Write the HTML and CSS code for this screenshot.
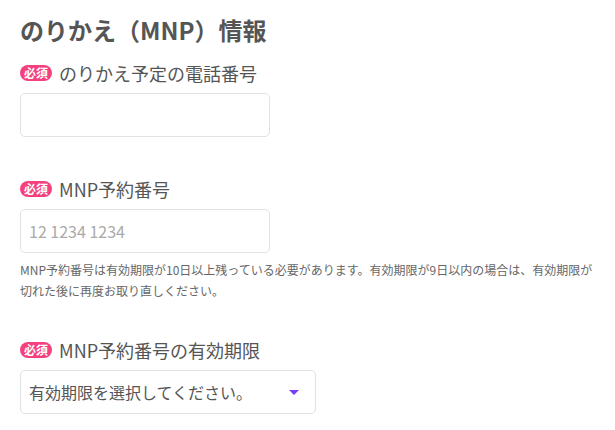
FILE: index.html
```html
<!DOCTYPE html>
<html lang="ja">
<head>
<meta charset="UTF-8">
<meta name="viewport" content="width=device-width, initial-scale=1.0">
<title>のりかえ（MNP）情報</title>
<link rel="stylesheet" href="styles.css">
</head>
<body>
<div class="container">
<h2 class="section-title">のりかえ（MNP）情報</h2>

<div class="field">
<label class="field-label"><span class="badge">必須</span>のりかえ予定の電話番号</label>
<input type="text" class="text-input">
</div>

<div class="field field-help">
<label class="field-label"><span class="badge">必須</span>MNP予約番号</label>
<input type="text" class="text-input" placeholder="12 1234 1234">
<p class="help">MNP予約番号は有効期限が10日以上残っている必要があります。有効期限が9日以内の場合は、有効期限が切れた後に再度お取り直しください。</p>
</div>

<div class="field">
<label class="field-label"><span class="badge">必須</span>MNP予約番号の有効期限</label>
<div class="select-box">
<span>有効期限を選択してください。</span>
<span class="arrow"></span>
</div>
</div>
</div>
</body>
</html>
```

FILE: styles.css
```css
body {
font-family: "Noto Sans CJK JP", "Noto Sans", sans-serif;
margin: 0;
padding: 0;
background: #fff;
color: #555;
}
.container {
padding: 13px 20px 0 20px;
width: 575px;
}
.section-title {
font-size: 24px;
font-weight: 700;
line-height: 34px;
margin: 0 0 14px 0;
color: #555;
}
.field {
margin-bottom: 40px;
}
.field-help {
margin-bottom: 37px;
}
.field-label {
display: flex;
align-items: center;
font-size: 18px;
line-height: 24px;
color: #555;
margin-bottom: 8px;
}
.badge {
display: inline-block;
background-color: #f5407e;
color: white;
font-size: 12px;
font-weight: 700;
line-height: 16px;
height: 16px;
padding: 0 4px;
border-radius: 8px;
margin-right: 7px;
}
.text-input {
display: block;
box-sizing: border-box;
width: 250px;
height: 44px;
border: 1px solid #e2e2e2;
border-radius: 5px;
padding: 0 8px;
font-family: inherit;
font-size: 16px;
color: #555;
margin: 0;
}
.text-input::placeholder {
color: #aaa;
}
.help {
font-size: 12px;
line-height: 21px;
color: #666;
margin: 6px 0 0 0;
}
.select-box {
box-sizing: border-box;
width: 296px;
height: 44px;
border: 1px solid #e2e2e2;
border-radius: 5px;
padding: 0 16px 0 8px;
display: flex;
align-items: center;
justify-content: space-between;
font-size: 16px;
color: #555;
}
.arrow {
width: 0;
height: 0;
border-left: 5px solid transparent;
border-right: 5px solid transparent;
border-top: 5px solid #7b3ff2;
}
```
